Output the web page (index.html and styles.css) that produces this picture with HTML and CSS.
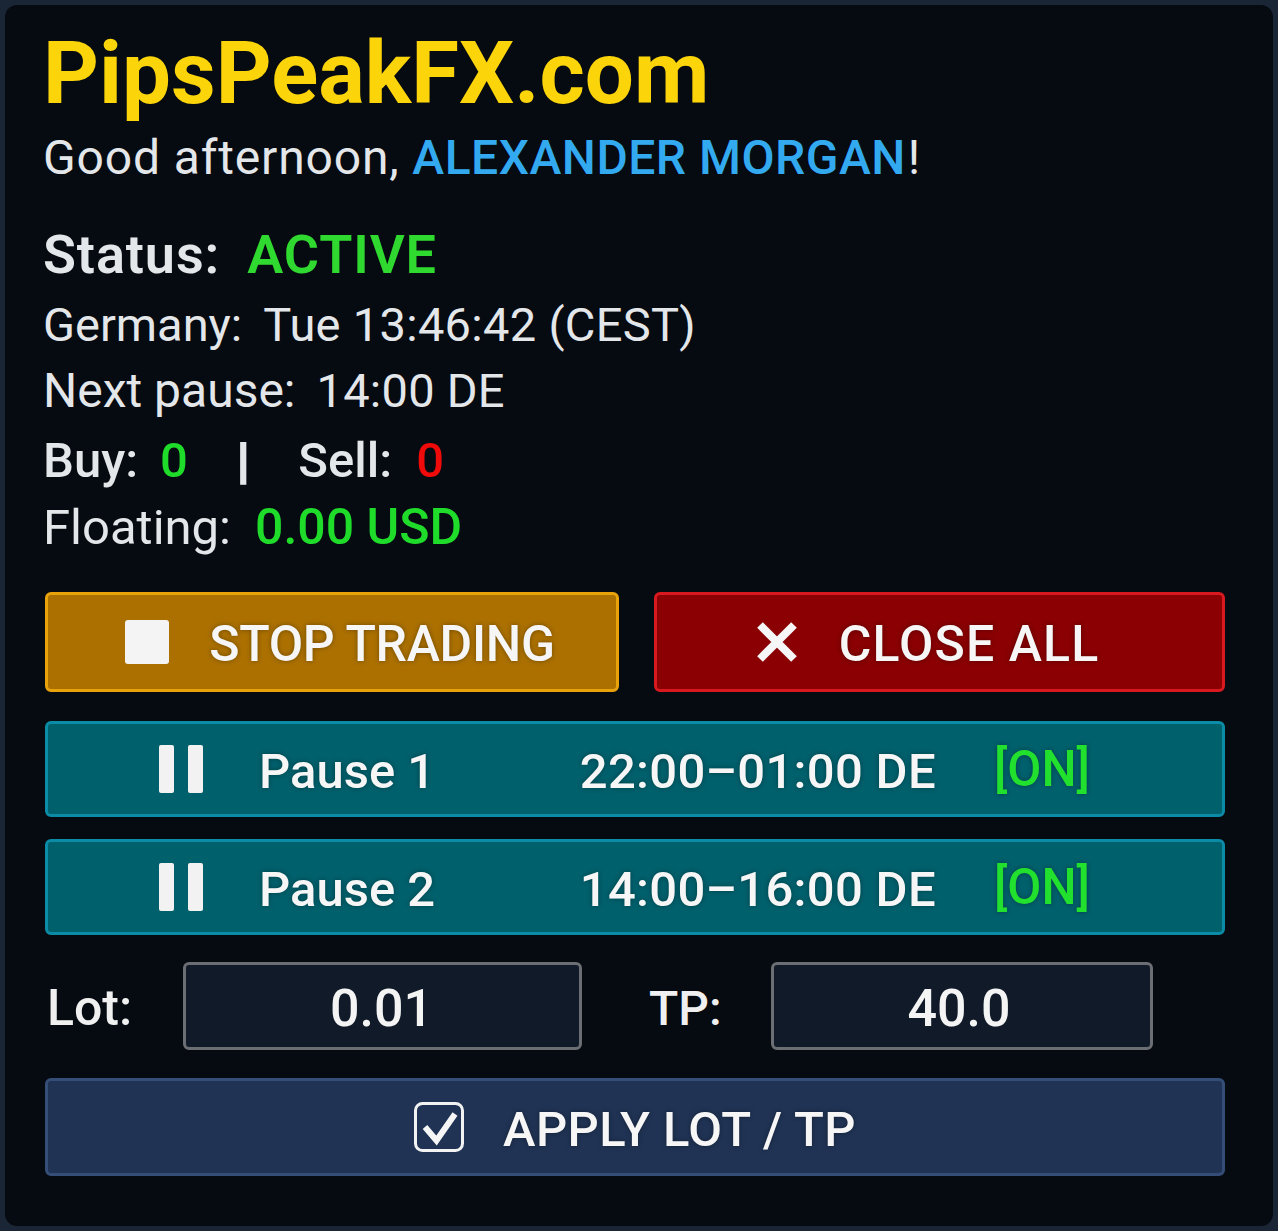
FILE: index.html
```html
<!DOCTYPE html>
<html lang="en">
<head>
<meta charset="utf-8">
<title>PipsPeakFX.com</title>
<link rel="stylesheet" href="styles.css">
</head>
<body>
<main class="panel">
  <h1 class="brand">PipsPeakFX.com</h1>
  <p class="greeting">Good afternoon, <span class="name">ALEXANDER MORGAN</span>!</p>
  <p class="status">Status:<span class="active">ACTIVE</span></p>
  <p class="info info-germany">Germany:<span class="val">Tue 13:46:42 (CEST)</span></p>
  <p class="info info-next">Next pause:<span class="val">14:00 DE</span></p>
  <p class="info info-counts">Buy:<span class="buy">0</span><span class="sep">|</span>Sell:<span class="sell">0</span></p>
  <p class="info info-floating">Floating:<span class="float">0.00 USD</span></p>

  <div class="actions">
    <button class="btn stop">
      <svg class="ico-stop" width="44" height="44" viewBox="0 0 44 44"><rect width="44" height="44" rx="3" fill="#f4f4f4"/></svg>
      <span class="txt">STOP TRADING</span>
    </button>
    <button class="btn close">
      <svg class="ico-x" width="42" height="42" viewBox="0 0 42 42"><path d="M4 4 38 38M38 4 4 38" stroke="#f6f6f6" stroke-width="8" fill="none"/></svg>
      <span class="txt">CLOSE ALL</span>
    </button>
  </div>

  <div class="pause pause-one">
    <svg class="ico-pause" width="44" height="48" viewBox="0 0 44 48"><rect width="15" height="48" rx="2" fill="#f2f2f2"/><rect x="29" width="15" height="48" rx="2" fill="#f2f2f2"/></svg>
    <span class="txt p-label">Pause 1</span>
    <span class="txt p-time">22:00–01:00 DE</span>
    <span class="p-on">[ON]</span>
  </div>
  <div class="pause pause-two">
    <svg class="ico-pause" width="44" height="48" viewBox="0 0 44 48"><rect width="15" height="48" rx="2" fill="#f2f2f2"/><rect x="29" width="15" height="48" rx="2" fill="#f2f2f2"/></svg>
    <span class="txt p-label">Pause 2</span>
    <span class="txt p-time">14:00–16:00 DE</span>
    <span class="p-on">[ON]</span>
  </div>

  <div class="fields">
    <span class="txt f-label f-lot">Lot:</span>
    <div class="field field-lot"><span class="txt">0.01</span></div>
    <span class="txt f-label f-tp">TP:</span>
    <div class="field field-tp"><span class="txt">40.0</span></div>
  </div>

  <button class="apply">
    <svg class="ico-check" width="50" height="50" viewBox="0 0 50 50"><rect x="1.5" y="1.5" width="47" height="47" rx="7" fill="none" stroke="#f2f2f2" stroke-width="3"/><path d="M11 25 22.5 38.5 41 12" fill="none" stroke="#f6f6f6" stroke-width="6"/></svg>
    <span class="txt">APPLY LOT / TP</span>
  </button>
</main>
</body>
</html>
```

FILE: styles.css
```css
* { box-sizing: border-box; }
html, body { margin: 0; height: 100%; }
body {
  background: #1a2636;
  padding: 5px;
  font-family: Roboto, "Liberation Sans", sans-serif;
  color: #e4e7ea;
  overflow: hidden;
}
.panel {
  height: 1221px;
  background: #060a11;
  border-radius: 12px;
  padding: 26px 48px 0 40px;
  display: flex;
  flex-direction: column;
}
p, h1 { margin: 0; }
.brand, .greeting, .status, .info { margin-left: -2px; }
.brand {
  font-size: 87px;
  line-height: 84px;
  font-weight: 700;
  color: #fbd40a;
}
.greeting {
  margin-top: 13px;
  font-size: 48px;
  line-height: 60px;
  letter-spacing: .85px;
}
.name { color: #33aaf0; font-weight: 500; letter-spacing: .5px; margin-right: 2px; }
.status {
  margin-top: 37px;
  font-size: 54px;
  line-height: 60px;
  font-weight: 600;
  letter-spacing: .9px;
}
.active { color: #30d92f; margin-left: 27px; }
.info { font-size: 47px; line-height: 54px; }
.info-germany { margin-top: 13px; }
.info-next { margin-top: 12px; font-size: 48px; }
.info-counts { margin-top: 16px; font-size: 49px; font-weight: 500; }
.info-floating { margin-top: 12px; font-size: 49px; }
.val { margin-left: 21px; letter-spacing: .3px; }
.info-next .val { font-size: 47px; letter-spacing: .25px; }
.buy { color: #1fdc2b; margin-left: 22px; }
.sell { color: #f00a0a; margin-left: 24px; }
.float { color: #1fdc2b; margin-left: 24px; font-size: 50px; font-weight: 500; }
.sep { margin: 0 49px 0 49px; font-weight: 700; -webkit-text-stroke: 2px #e4e7ea; }

.actions { display: flex; gap: 35px; margin-top: 37px; }
.btn, .apply {
  font-family: inherit;
  color: #f6f6f6;
  display: flex;
  align-items: center;
  justify-content: center;
  border-radius: 6px;
  text-shadow: 0 0 5px rgba(0, 0, 0, .35);
  padding: 0;
}
.txt { padding-top: 4px; }
.btn {
  height: 100px;
  font-size: 50px;
  font-weight: 500;
}
.stop {
  width: 574px;
  padding-left: 16px;
  background: #ab7000;
  border: 3px solid #e8a30a;
  letter-spacing: -.3px;
}
.close {
  width: 571px;
  padding-right: 24px;
  background: #8a0003;
  border: 3px solid #d8191f;
  letter-spacing: 1.1px;
}
.ico-stop { margin-right: 40px; }
.ico-x { margin-right: 41px; }

.pause {
  display: flex;
  align-items: center;
  height: 96px;
  padding: 0 132px 0 111px;
  background: #00606c;
  border: 3px solid #0b8ca6;
  border-radius: 6px;
  color: #f6f6f6;
  font-size: 49px;
  font-weight: 500;
  text-shadow: 0 0 5px rgba(0, 0, 0, .35);
}
.pause-one { margin-top: 29px; }
.pause-two { margin-top: 22px; }
.ico-pause { margin-right: 56px; flex: none; }
.p-label { flex: 1; }
.p-time { margin-right: 58px; letter-spacing: .3px; }
.p-on { color: #22e02e; font-weight: 500; font-size: 49.5px; }

.fields { display: flex; align-items: center; height: 88px; margin-top: 27px; }
.f-label { font-weight: 500; color: #f0f0f0; }
.f-lot { width: 138px; padding-left: 2px; font-size: 50px; }
.f-tp { width: 122px; margin-left: 67px; font-size: 48px; }
.field {
  height: 88px;
  background: #111a28;
  border: 3px solid #6b6e72;
  border-radius: 6px;
  display: flex;
  align-items: center;
  justify-content: center;
  font-size: 52px;
  font-weight: 500;
  color: #f4f4f4;
}
.field-lot { width: 399px; padding-right: 2px; }
.field-tp { width: 382px; padding-right: 6px; }

.apply {
  margin-top: 28px;
  height: 98px;
  width: 100%;
  background: #203354;
  border: 3px solid #344e78;
  font-size: 49px;
  font-weight: 500;
  letter-spacing: .4px;
}
.ico-check { margin-right: 39px; }
```
